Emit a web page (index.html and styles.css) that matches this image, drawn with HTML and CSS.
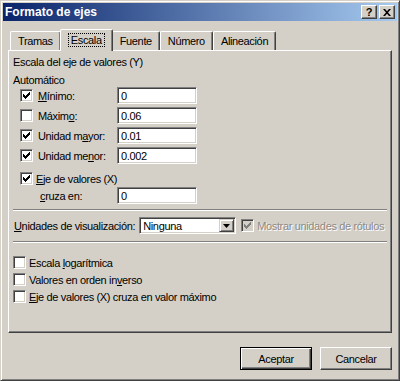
FILE: index.html
```html
<!DOCTYPE html>
<html lang="es">
<head>
  <meta charset="UTF-8" />
  <title>Formato de ejes</title>
  <link rel="stylesheet" href="styles.css">
</head>
<body>

  <div class="window">
    <div class="titlebar">
      <span class="title">Formato de ejes</span>
      <div class="title-buttons">
        <span class="tbtn">?</span>
        <span class="tbtn tbtn-close">
          <svg width="8" height="7" viewBox="0 0 8 7"><path d="M0 0h2l2 2.2L6 0h2L5 3.5 8 7H6L4 4.8 2 7H0l3-3.5z" fill="#000"/></svg>
        </span>
      </div>
    </div>

    <div class="dialog">
      <div class="tabs">
        <div class="tab tab-first">Tramas</div>
        <div class="tab tab-active"><span class="focus">Escala</span></div>
        <div class="tab">Fuente</div>
        <div class="tab">Número</div>
        <div class="tab">Alineación</div>
      </div>

      <div class="panel">
        <div class="heading">Escala del eje de valores (Y)</div>
        <div class="subheading">Automático</div>

        <div class="grid">
          <label class="check"><span class="box checked"></span><span class="lbl"><u>M</u>ínimo:</span></label>
          <span class="field">0</span>

          <label class="check"><span class="box"></span><span class="lbl">Máxim<u>o</u>:</span></label>
          <span class="field">0.06</span>

          <label class="check"><span class="box checked"></span><span class="lbl">Unidad m<u>a</u>yor:</span></label>
          <span class="field">0.01</span>

          <label class="check"><span class="box checked"></span><span class="lbl">Unidad me<u>n</u>or:</span></label>
          <span class="field">0.002</span>
        </div>

        <label class="check check-eje"><span class="box checked"></span><span><u>E</u>je de valores (X)</span></label>
        <div class="grid grid-cruza">
          <span class="cruza"><u>c</u>ruza en:</span>
          <span class="field">0</span>
        </div>

        <div class="sep"></div>

        <div class="units">
          <span class="units-label"><u>U</u>nidades de visualización:</span>
          <span class="select">
            <span class="select-value">Ninguna</span>
            <span class="select-btn"><svg width="7" height="4" viewBox="0 0 7 4"><path d="M0 0h7L3.5 4z" fill="#000"/></svg></span>
          </span>
          <label class="check disabled"><span class="box checked"></span><span>Mostrar unidades de rótulos</span></label>
        </div>

        <div class="sep sep-second"></div>

        <div class="options">
          <label class="check"><span class="box"></span><span>Escala <u>l</u>ogarítmica</span></label>
          <label class="check"><span class="box"></span><span>Valores en orden in<u>v</u>erso</span></label>
          <label class="check"><span class="box"></span><span><u>E</u>je de valores (X) cruza en valor máximo</span></label>
        </div>
      </div>

      <div class="actions">
        <span class="btn btn-default">Aceptar</span>
        <span class="btn">Cancelar</span>
      </div>
    </div>
  </div>

</body>
</html>
```

FILE: styles.css
```css
/* Classic dialog look */
body {
  margin: 0;
  background: #d4d0c8;
  font-family: 'Liberation Sans', Tahoma, sans-serif;
  font-size: 11px;
  letter-spacing: -0.35px;
  color: #000;
}

u {
  text-decoration-thickness: 1px;
  text-underline-offset: 1px;
}

.window {
  width: 400px;
  height: 381px;
  box-sizing: border-box;
  padding: 2px;
  background: #d4d0c8;
  border: 1px solid;
  border-color: #d4d0c8 #404040 #404040 #d4d0c8;
  box-shadow: inset 1px 1px #fff, inset -1px -1px #808080;
  display: flex;
  flex-direction: column;
}

.titlebar {
  height: 18px;
  display: flex;
  align-items: center;
  justify-content: space-between;
  padding: 0 2px 0 2px;
  background: linear-gradient(to right, #0a246a, #a6caf0);
}

.title {
  color: #fff;
  font-weight: bold;
  font-size: 12px;
  letter-spacing: 0;
}

.title-buttons {
  display: flex;
  gap: 2px;
}

.tbtn {
  width: 16px;
  height: 14px;
  box-sizing: border-box;
  display: flex;
  align-items: center;
  justify-content: center;
  background: #d4d0c8;
  border: 1px solid;
  border-color: #fff #404040 #404040 #fff;
  box-shadow: inset -1px -1px #808080;
  font-weight: bold;
  font-size: 11px;
  line-height: 1;
}

.dialog {
  flex: 1;
  display: flex;
  flex-direction: column;
  padding: 7px 5px 0 5px;
}

/* Tabs */
.tabs {
  display: flex;
  align-items: flex-end;
  padding-left: 2px;
  height: 22px;
  position: relative;
  z-index: 1;
}

.tab {
  height: 19px;
  box-sizing: border-box;
  padding: 3px 7px 0 7px;
  border-top: 1px solid #fff;
  border-left: 1px solid #fff;
  border-right: 1px solid #404040;
  border-radius: 2px 2px 0 0;
  box-shadow: inset -1px 0 #808080;
  background: #d4d0c8;
}

.tab-active {
  height: 22px;
  padding: 3px 7px 0 7px;
  margin: 0 -1px -1px -1px;
  position: relative;
}

.focus {
  display: inline-block;
  padding: 1px 3px;
  outline: 1px dotted #000;
  outline-offset: -1px;
}

/* Panel */
.panel {
  height: 283px;
  box-sizing: border-box;
  border: 1px solid;
  border-color: #fff #404040 #404040 #fff;
  box-shadow: inset -1px -1px #808080;
  padding: 5px 4px 0 4px;
}

.heading {
  height: 13px;
  line-height: 13px;
}

.subheading {
  margin-top: 5px;
  height: 13px;
  line-height: 13px;
}

.grid {
  display: grid;
  grid-template-columns: 97px 80px;
  row-gap: 3px;
  margin-top: 0;
  margin-left: 7px;
  align-items: center;
}

.grid-cruza {
  margin-top: 2px;
}

.check {
  display: flex;
  align-items: center;
  gap: 3px;
  white-space: nowrap;
}

.grid .check .lbl {
  margin-left: 2px;
}

.check-eje {
  margin-left: 7px;
  margin-top: 8px;
  height: 13px;
}

.cruza {
  padding-left: 20px;
}

.box {
  width: 13px;
  height: 13px;
  box-sizing: border-box;
  flex: none;
  background: #fff;
  border: 1px solid;
  border-color: #808080 #fff #fff #808080;
  box-shadow: inset 1px 1px #404040, inset -1px -1px #d4d0c8;
  position: relative;
}

.box.checked::after {
  content: "";
  position: absolute;
  left: 2px;
  top: 2px;
  width: 7px;
  height: 7px;
  background: no-repeat center / 7px 7px url("data:image/svg+xml,%3Csvg xmlns='http://www.w3.org/2000/svg' width='7' height='7' shape-rendering='crispEdges'%3E%3Cpath d='M0 2h1v3H0zM1 3h1v3H1zM2 4h1v3H2zM3 3h1v3H3zM4 2h1v3H4zM5 1h1v3H5zM6 0h1v3H6z' fill='%23000'/%3E%3C/svg%3E");
}

.disabled {
  color: #8d8a85;
  text-shadow: 1px 1px #fff;
}

.disabled .box {
  background: #d4d0c8;
}

.disabled .box.checked::after {
  background-image: url("data:image/svg+xml,%3Csvg xmlns='http://www.w3.org/2000/svg' width='7' height='7' shape-rendering='crispEdges'%3E%3Cpath d='M0 2h1v3H0zM1 3h1v3H1zM2 4h1v3H2zM3 3h1v3H3zM4 2h1v3H4zM5 1h1v3H5zM6 0h1v3H6z' fill='%23808080'/%3E%3C/svg%3E");
}

.field {
  height: 17px;
  box-sizing: border-box;
  padding: 2px 3px 0 3px;
  background: #fff;
  border: 1px solid;
  border-color: #808080 #fff #fff #808080;
  box-shadow: inset 1px 1px #404040, inset -1px -1px #d4d0c8;
  line-height: 13px;
}

.sep {
  height: 0;
  margin-top: 5px;
  border-top: 1px solid #808080;
  border-bottom: 1px solid #fff;
}

.sep-second {
  margin-top: 7px;
}

.units {
  display: flex;
  align-items: center;
  margin-top: 6px;
  padding-left: 1px;
  height: 17px;
  white-space: nowrap;
}

.units-label {
  flex: none;
}

.select {
  display: flex;
  flex: none;
  margin-left: 4px;
  width: 97px;
  height: 17px;
  box-sizing: border-box;
  background: #fff;
  border: 1px solid;
  border-color: #808080 #fff #fff #808080;
  box-shadow: inset 1px 1px #404040, inset -1px -1px #d4d0c8;
  padding: 1px;
}

.select-value {
  flex: 1;
  padding: 1px 0 0 2px;
  line-height: 13px;
}

.select-btn {
  width: 15px;
  height: 13px;
  box-sizing: border-box;
  display: flex;
  align-items: center;
  justify-content: center;
  background: #d4d0c8;
  border: 1px solid;
  border-color: #d4d0c8 #404040 #404040 #d4d0c8;
  box-shadow: inset 1px 1px #fff, inset -1px -1px #808080;
}

.units .check {
  margin-left: 5px;
}

.options {
  display: flex;
  flex-direction: column;
  gap: 4px;
  margin-top: 13px;
}

/* Bottom buttons */
.actions {
  display: flex;
  justify-content: flex-end;
  gap: 8px;
  margin-top: 14px;
}

.btn {
  width: 72px;
  height: 23px;
  box-sizing: border-box;
  display: flex;
  align-items: center;
  justify-content: center;
  background: #d4d0c8;
  border: 1px solid;
  border-color: #fff #404040 #404040 #fff;
  box-shadow: inset -1px -1px #808080;
}

.btn-default {
  border-color: #000;
  box-shadow: inset 1px 1px #fff, inset -1px -1px #404040, inset -2px -2px #808080;
}
```
